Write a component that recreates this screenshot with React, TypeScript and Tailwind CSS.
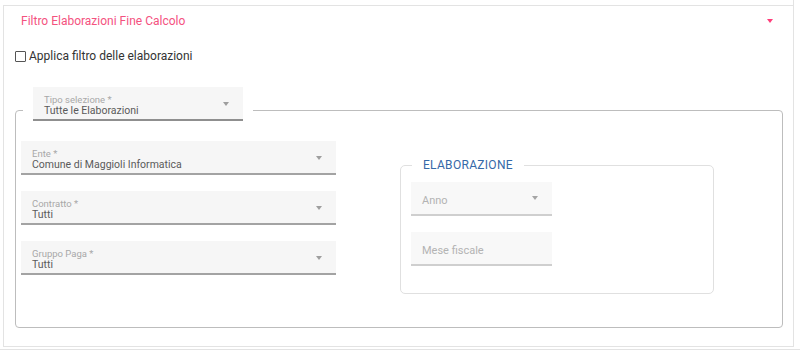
import { ReactNode } from "react";

function Caret({ className = "border-t-[#9e9e9e]" }: { className?: string }) {
  return (
    <span className={`inline-block w-0 h-0 border-l-[3.5px] border-r-[3.5px] border-t-[4px] border-l-transparent border-r-transparent ${className}`} />
  );
}

function SelectField({
  label,
  value,
  width,
  line = "border-[#a3a3a3]",
}: {
  label?: string;
  value: string;
  width: string;
  line?: string;
}) {
  return (
    <div className={`${width} h-[34px] bg-[#f6f6f6] border-b-2 ${line} flex items-start pl-[11px] pr-[14px]`}>
      <div className="flex-1 flex flex-col pt-[8px]">
        {label && <span className="text-[9.5px] text-[#a8a8a8] leading-[10px]">{label}</span>}
        <span className="text-[10.5px] text-[#5a5a5a] leading-[12px]">{value}</span>
      </div>
      <span className="self-center pt-[2px] flex">
        <Caret />
      </span>
    </div>
  );
}

function PlaceholderField({ text, caret, width }: { text: string; caret?: boolean; width: string }) {
  return (
    <div className={`${width} h-[34px] bg-[#f8f8f8] border-b-2 border-[#cfcfcf] flex items-center pl-[11px] pr-[14px]`}>
      <span className="flex-1 text-[11px] leading-[14px] pt-[6px] text-[#b3b3b3]">{text}</span>
      {caret && <Caret className="border-t-[#a5a5a5]" />}
    </div>
  );
}

function Group({ children }: { children: ReactNode }) {
  return <div className="flex flex-col gap-[16px]">{children}</div>;
}

export default function App() {
  return (
    <div className="w-[800px] h-[354px] bg-white font-['Roboto','Liberation_Sans',sans-serif] overflow-hidden">
      <div className="flex">
        <div className="w-[3px]" />
        <div className="flex-1 h-[5px] border-r border-[#e3e3e3]" />
        <div className="w-[6px]" />
      </div>
      <div className="ml-[3px] mr-[6px] h-[342px] border border-[#e3e3e3] flex flex-col">
        {/* header */}
        <div className="h-[30px] flex items-center pl-[17px] pr-[20px]">
          <span className="flex-1 text-[12px] text-[#f4527f]">Filtro Elaborazioni Fine Calcolo</span>
          <Caret className="border-t-[#ff3d7a]" />
        </div>

        {/* checkbox */}
        <label className="mt-[11px] pl-[11px] flex items-center gap-[3px] text-[12px] text-[#333]">
          <span className="w-[11px] h-[11px] border border-[#555] rounded-[1px] bg-white" />
          Applica filtro delle elaborazioni
        </label>

        {/* main fieldset */}
        <div className="relative mt-[45px] ml-[11px] mr-[10px] h-[218px] border border-[#bdbdbd] rounded-[4px] flex">
          <div className="absolute left-[7px] top-[-24px] bg-white px-[10px]">
            <SelectField label="Tipo selezione *" value="Tutte le Elaborazioni" width="w-[210px]" line="border-[#8f8f8f]" />
          </div>

          <div className="pt-[30px] pl-[5px]">
            <Group>
              <SelectField label="Ente *" value="Comune di Maggioli Informatica" width="w-[315px]" />
              <SelectField label="Contratto *" value="Tutti" width="w-[315px]" />
              <SelectField label="Gruppo Paga *" value="Tutti" width="w-[315px]" />
            </Group>
          </div>

          <div className="ml-[64px] mt-[54px]">
            <div className="relative w-[314px] h-[129px] border border-[#e0e0e0] rounded-[5px] pt-[16px] pl-[10px]">
              <span className="absolute left-[11px] top-[-9px] bg-white px-[11px] text-[12px] leading-[16px] tracking-[0.3px] text-[#3569a8]">
                ELABORAZIONE
              </span>
              <Group>
                <PlaceholderField text="Anno" caret width="w-[141px]" />
                <PlaceholderField text="Mese fiscale" width="w-[141px]" />
              </Group>
            </div>
          </div>
        </div>
      </div>
      <div className="mt-[2px] h-px bg-[#e3e3e3]" />
    </div>
  );
}
